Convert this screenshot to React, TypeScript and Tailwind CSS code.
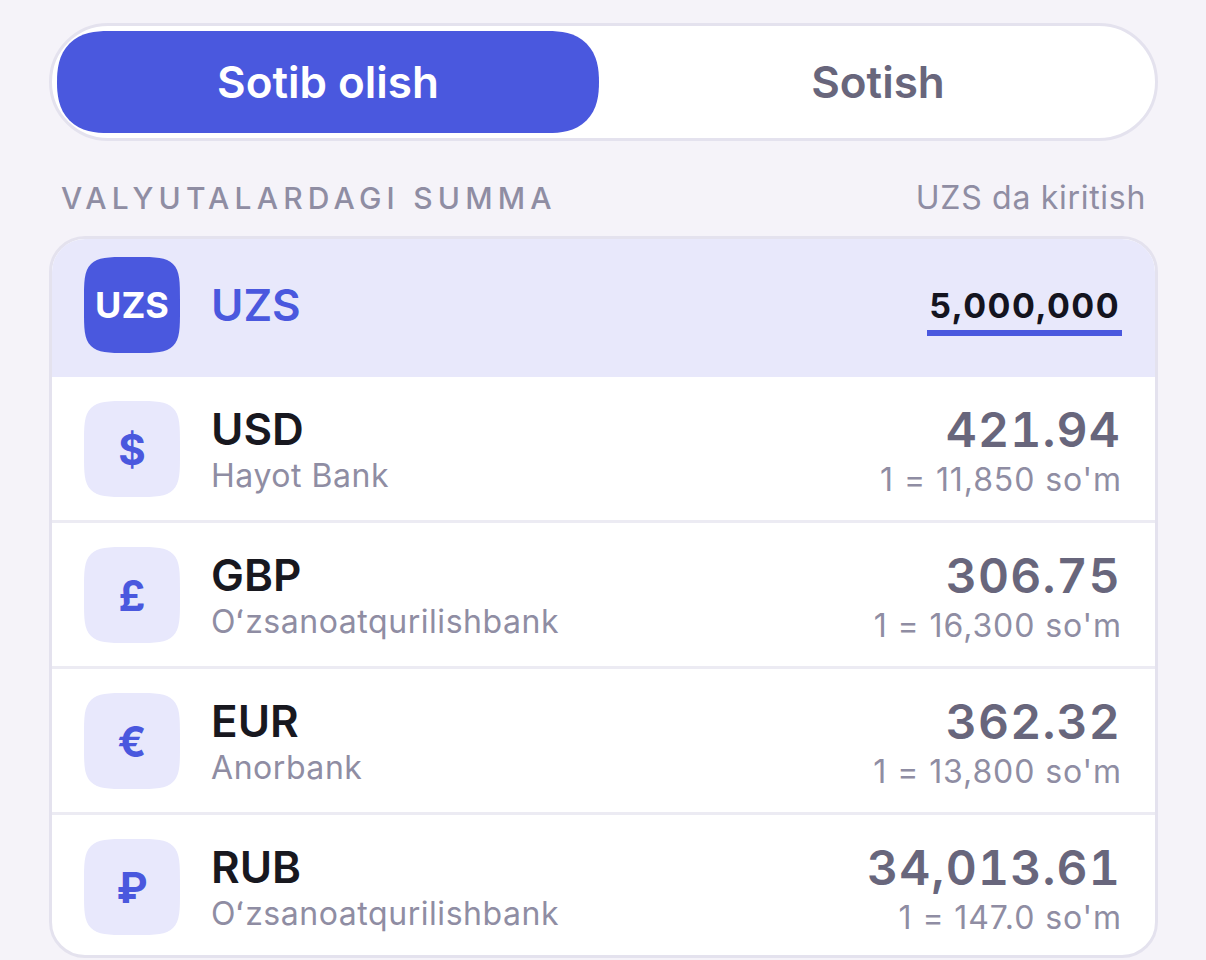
const font = { fontFamily: 'Inter, "Noto Sans", sans-serif' };

type Rate = {
  code: string;
  symbol: string;
  bank: string;
  amount: string;
  rate: string;
};

const rates: Rate[] = [
  { code: 'USD', symbol: '$', bank: 'Hayot Bank', amount: '421.94', rate: "1 = 11,850 so'm" },
  { code: 'GBP', symbol: '£', bank: 'Oʻzsanoatqurilishbank', amount: '306.75', rate: "1 = 16,300 so'm" },
  { code: 'EUR', symbol: '€', bank: 'Anorbank', amount: '362.32', rate: "1 = 13,800 so'm" },
  { code: 'RUB', symbol: '₽', bank: 'Oʻzsanoatqurilishbank', amount: '34,013.61', rate: "1 = 147.0 so'm" },
];

function RateRow({ item, last }: { item: Rate; last: boolean }) {
  return (
    <div className={`flex items-start px-[32px] pt-[24px] ${last ? 'h-[140px]' : 'h-[146px] border-b-[3px] border-[#ecebf3]'}`}>
      <div className="flex h-[96px] w-[96px] shrink-0 items-center justify-center rounded-[44px] bg-[#e8e8fc] text-[42px] font-bold text-[#4a58de] [corner-shape:squircle]">
        {item.symbol}
      </div>
      <div className="ml-[31px] flex flex-1 flex-col">
        <div className="text-[44px] leading-[56px] font-semibold text-[#18181f]">{item.code}</div>
        <div className="text-[32px] leading-[38px] tracking-[0.55px] text-[#8f8da3]">{item.bank}</div>
      </div>
      <div className="flex flex-col items-end">
        <div className="mt-[1px] mr-[2px] text-[48px] leading-[56px] font-semibold tracking-[1.2px] text-[#68667c] tabular-nums">{item.amount}</div>
        <div className="mt-[3px] mr-[1px] text-[32px] leading-[38px] tracking-[0.9px] text-[#8f8da3]">{item.rate}</div>
      </div>
    </div>
  );
}

export default function App() {
  return (
    <div className="h-[960px] overflow-hidden bg-[#f5f3f9] pt-[23px] pr-[48px] pl-[49px]" style={font}>
      {/* Buy / sell switch */}
      <div className="flex h-[118px] rounded-[59px] border-[3px] border-[#e4e2ee] bg-white p-[5px]">
        <div className="flex w-[542px] items-center justify-center rounded-[51px] bg-[#4a58de] text-[44px] font-[560] text-white [corner-shape:superellipse(1.3)]">
          Sotib olish
        </div>
        <div className="flex flex-1 items-center justify-center pl-[7px] text-[44px] font-[560] text-[#68667c]">
          Sotish
        </div>
      </div>

      <div className="mt-[38px] flex items-center justify-between pr-[12px] pl-[12px] leading-[38px]">
        <span className="text-[30px] font-medium tracking-[5.2px] text-[#8f8da3]">VALYUTALARDAGI SUMMA</span>
        <span className="text-[32px] tracking-[0.7px] text-[#8f8da3]">UZS da kiritish</span>
      </div>

      {/* Currency list */}
      <div className="mt-[19px] overflow-hidden rounded-[36px] border-[3px] border-[#e4e2ee] bg-white">
        <div className="flex h-[138px] items-center justify-between bg-[#e8e8fb] px-[32px]">
          <div className="flex items-center pb-[6px]">
            <div className="flex h-[96px] w-[96px] items-center justify-center rounded-[44px] bg-[#4a58de] text-[36px] font-bold text-white [corner-shape:squircle]">
              UZS
            </div>
            <div className="ml-[31px] text-[44px] font-[560] text-[#4a58de]">UZS</div>
          </div>
          <div className="mt-[2px] mr-[1px] border-b-[6px] border-[#4a58de] px-[2px] text-[34px] leading-[48px] font-bold tracking-[1.4px] text-[#14141f]">
            5,000,000
          </div>
        </div>
        {rates.map((item, i) => (
          <RateRow key={item.code} item={item} last={i === rates.length - 1} />
        ))}
      </div>
    </div>
  );
}
